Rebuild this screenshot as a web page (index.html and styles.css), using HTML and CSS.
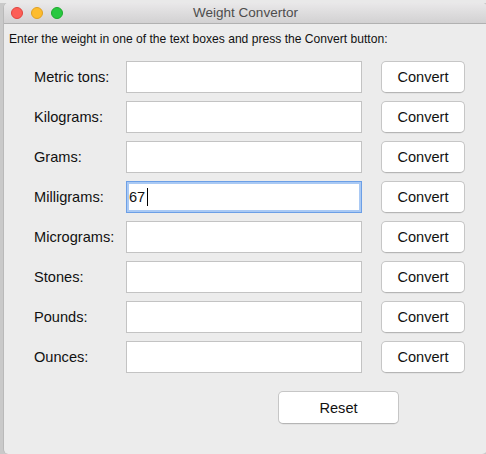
FILE: index.html
```html
<!DOCTYPE html>
<html>
<head>
<meta charset="utf-8">
<title>Weight Convertor</title>
<link rel="stylesheet" href="styles.css">
</head>
<body>
<div class="desktop">
  <div class="window">
    <div class="titlebar">
      <div class="lights">
        <span class="light red"></span>
        <span class="light yellow"></span>
        <span class="light green"></span>
      </div>
      <div class="title">Weight Convertor</div>
    </div>
    <div class="content">
      <p class="intro">Enter the weight in one of the text boxes and press the Convert button:</p>
      <div class="form">
        <label class="label">Metric tons:</label>
        <div class="field" role="textbox"></div>
        <button class="btn">Convert</button>

        <label class="label">Kilograms:</label>
        <div class="field" role="textbox"></div>
        <button class="btn">Convert</button>

        <label class="label">Grams:</label>
        <div class="field" role="textbox"></div>
        <button class="btn">Convert</button>

        <label class="label">Milligrams:</label>
        <div class="field focused" role="textbox"><span class="value">67</span><span class="caret"></span></div>
        <button class="btn">Convert</button>

        <label class="label">Micrograms:</label>
        <div class="field" role="textbox"></div>
        <button class="btn">Convert</button>

        <label class="label">Stones:</label>
        <div class="field" role="textbox"></div>
        <button class="btn">Convert</button>

        <label class="label">Pounds:</label>
        <div class="field" role="textbox"></div>
        <button class="btn">Convert</button>

        <label class="label">Ounces:</label>
        <div class="field" role="textbox"></div>
        <button class="btn">Convert</button>
      </div>
      <div class="footer">
        <button class="btn reset">Reset</button>
      </div>
    </div>
  </div>
</div>
</body>
</html>
```
FILE: styles.css
```css
html, body {
  margin: 0;
  padding: 0;
  width: 486px;
  height: 454px;
  overflow: hidden;
}
body {
  font-family: "Liberation Sans", Arial, sans-serif;
  background: #d4d4d4;
}
.desktop {
  width: 486px;
  height: 454px;
  padding: 3px 0 0 3px;
  box-sizing: border-box;
  background: linear-gradient(to bottom, #e9e9e9 0, #e9e9e9 3px, #c9c9c9 3px);
}
.window {
  width: 484px;
  height: 451px;
  background: #ececec;
  border-radius: 5px 5px 5px 5px;
  border-left: 1px solid #b9b9b9;
  box-sizing: border-box;
  display: flex;
  flex-direction: column;
  overflow: hidden;
}
.titlebar {
  height: 21px;
  flex: none;
  position: relative;
  background: linear-gradient(to bottom, #e9e8e9, #d2d1d2);
  border-bottom: 1px solid #b1b1b1;
  box-sizing: border-box;
  display: flex;
  align-items: center;
  justify-content: center;
}
.lights {
  position: absolute;
  left: 7px;
  top: 4px;
  display: flex;
  gap: 8px;
}
.light {
  width: 12px;
  height: 12px;
  border-radius: 50%;
  box-sizing: border-box;
}
.red { background: #fc5e57; border: 1px solid #e0443e; }
.yellow { background: #fdbc2e; border: 1px solid #dfa023; }
.green { background: #28c840; border: 1px solid #1daa2c; }
.title {
  font-size: 13.5px;
  color: #4d4d4d;
  line-height: 20px;
}
.content {
  flex: 1;
  display: flex;
  flex-direction: column;
}
.intro {
  margin: 8px 0 0 5px;
  font-size: 12.1px;
  line-height: 14px;
  color: #111;
}
.form {
  display: grid;
  grid-template-columns: 92px 255px 84px;
  grid-auto-rows: 32px;
  row-gap: 8px;
  margin: 15px 0 0 30px;
  align-items: center;
}
.label {
  font-size: 14.6px;
  color: #111;
  white-space: nowrap;
}
.field {
  width: 236px;
  height: 32px;
  box-sizing: border-box;
  background: #fff;
  border: 1px solid #c3c3c3;
  display: flex;
  align-items: center;
  padding-left: 2px;
  font-size: 14.6px;
  color: #111;
}
.field.focused {
  border: 1px solid #6c9fe6;
  box-shadow: inset 0 0 0 2px #a9c9f4;
}
.caret {
  width: 1px;
  height: 18px;
  background: #000;
  margin-left: 2px;
}
.btn {
  font-family: "Liberation Sans", Arial, sans-serif;
  font-size: 14.6px;
  color: #111;
  background: #fff;
  border: 1px solid #c6c6c6;
  border-bottom-color: #b5b5b5;
  border-radius: 5px;
  height: 32px;
  width: 84px;
  padding: 0;
  box-shadow: 0 0.5px 0.5px rgba(0,0,0,0.08);
}
.footer {
  display: flex;
  padding-left: 274px;
  margin-top: 18px;
}
.reset {
  width: 121px;
  height: 33px;
}
```
